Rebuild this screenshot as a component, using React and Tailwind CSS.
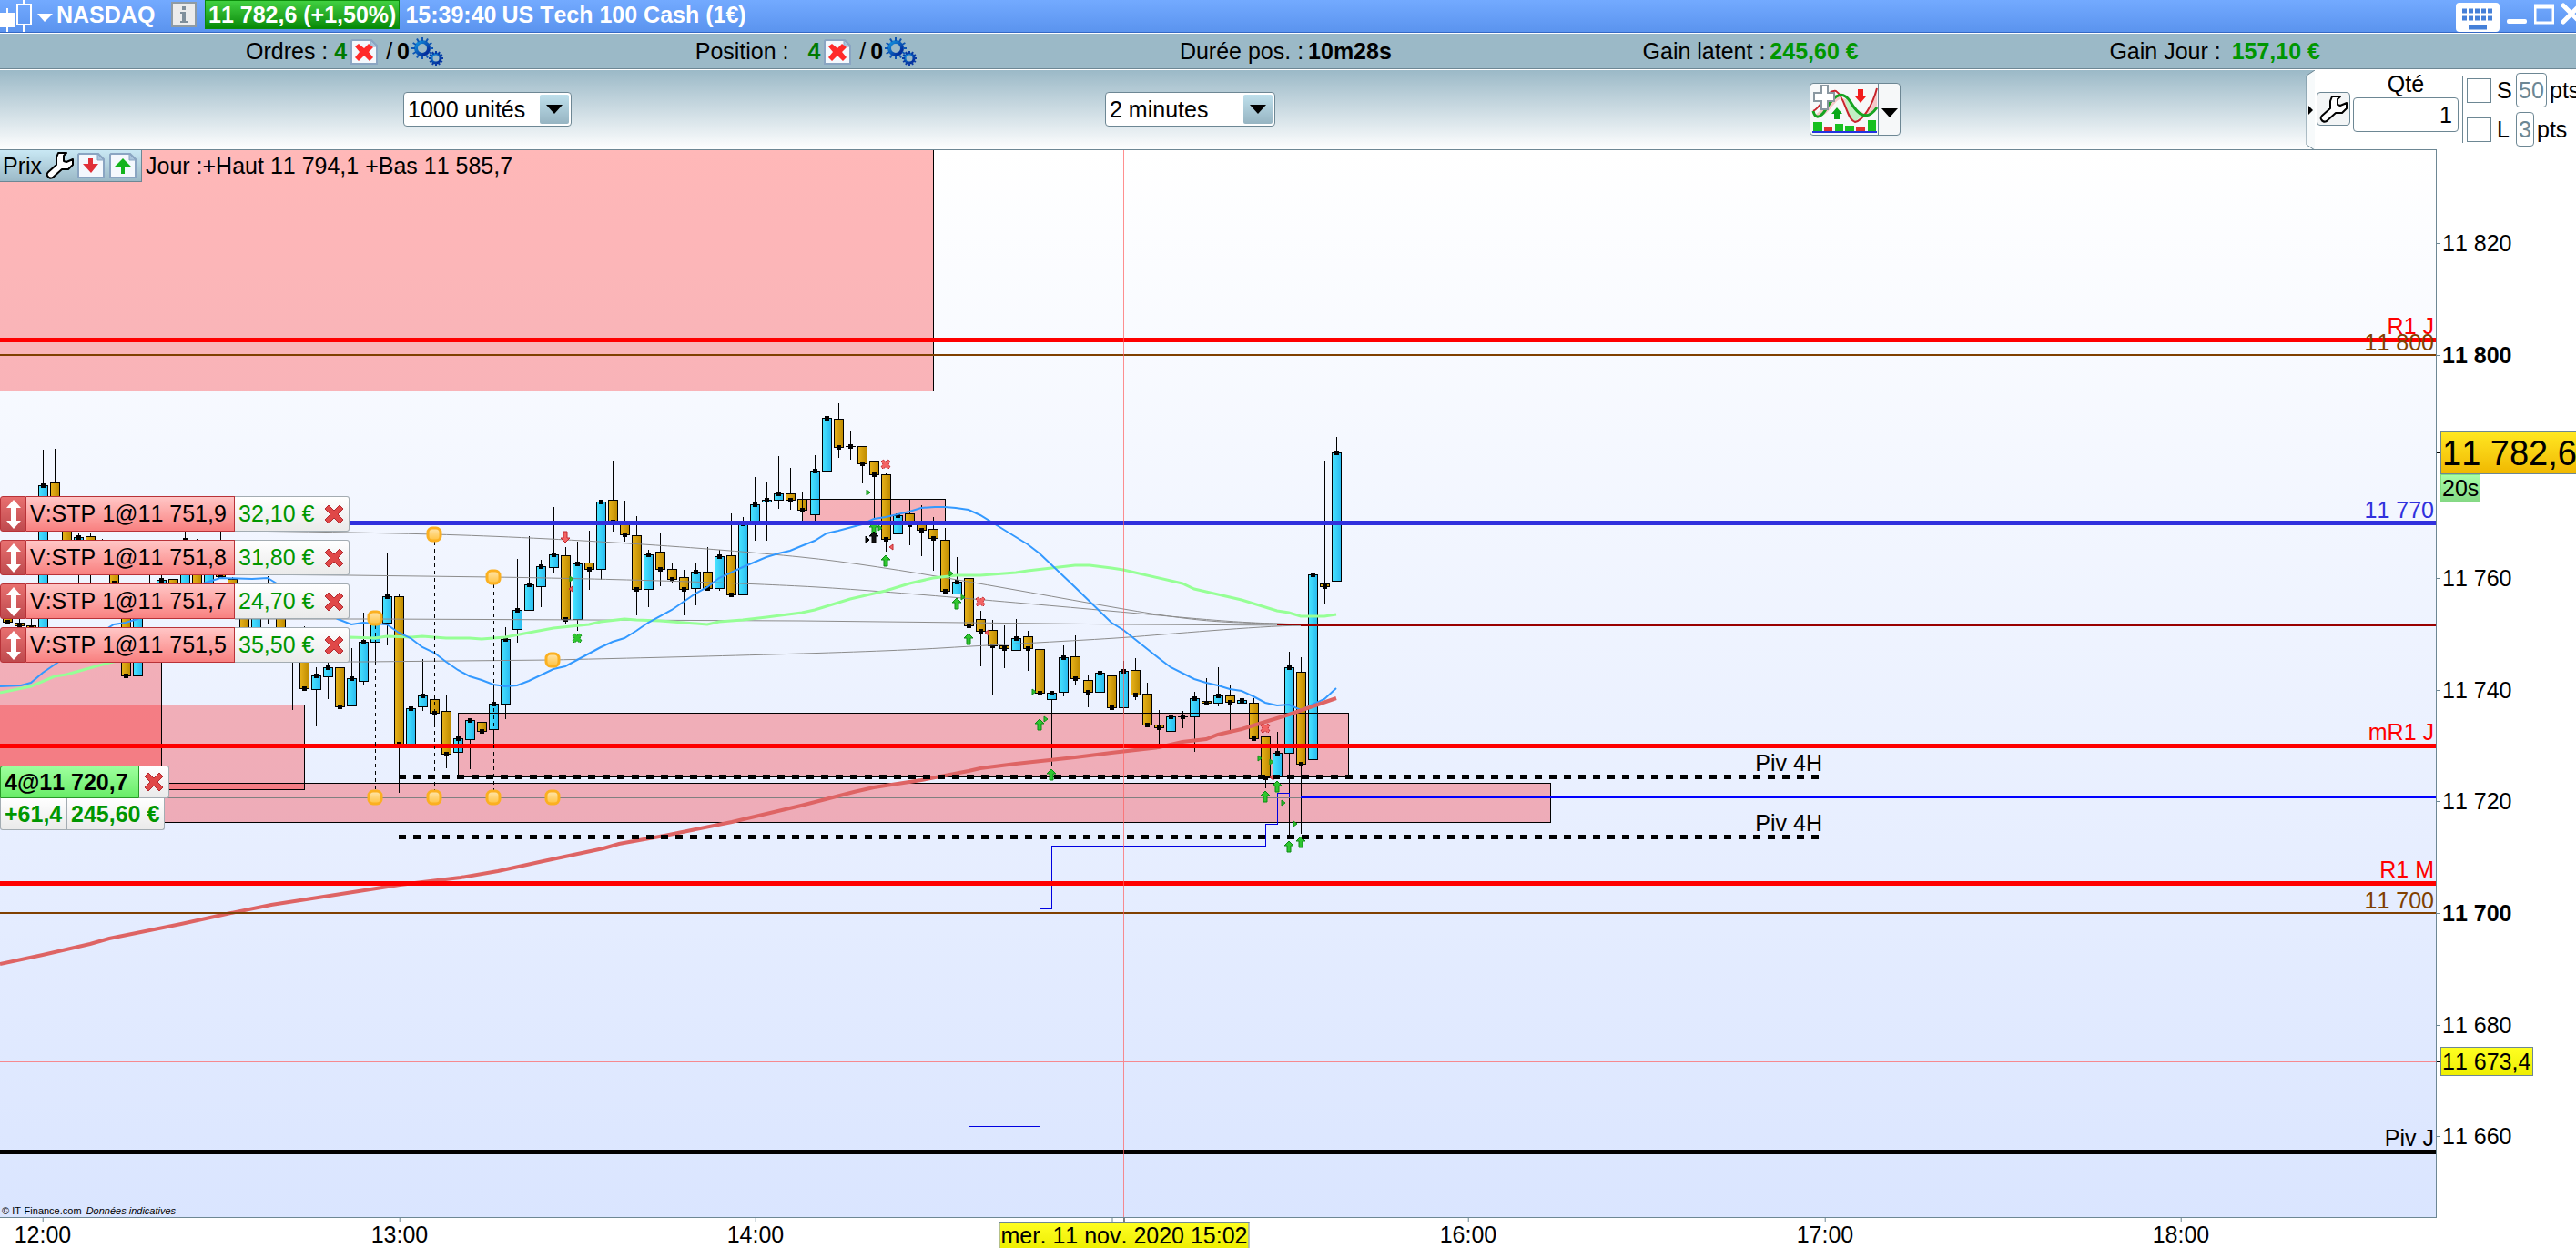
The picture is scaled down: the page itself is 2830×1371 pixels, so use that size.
import React from "react";

const PLOT_TOP = 165;
const priceTop = (price) => Math.round(390 - PLOT_TOP + (11800 - price) * 6.13);
const timeLeft = (hour) => Math.round(47 + (hour - 12) * 391.5);

/* [x, high, bodyTop, bodyBottom, low, direction] */
const CANDLES = [
  [8, 640, 652, 683, 683, -1], [21, 670, 684, 687, 689, -1], [34, 676, 687, 689, 689, -1],
  [47, 494, 533, 700, 710, 1], [60, 493, 530, 565, 575, -1], [73, 555, 562, 600, 600, -1],
  [86, 585, 590, 602, 645, 1], [99, 586, 589, 612, 645, -1], [112, 592, 600, 622, 626, -1],
  [125, 600, 612, 640, 640, -1], [138, 640, 640, 742, 742, -1], [151, 648, 652, 742, 742, 1],
  [164, 630, 652, 668, 675, -1], [177, 632, 637, 655, 660, 1], [190, 636, 636, 655, 660, -1],
  [203, 575, 593, 655, 660, 1], [216, 592, 600, 655, 660, -1], [229, 600, 612, 655, 660, 1],
  [242, 560, 600, 633, 635, -1], [255, 634, 636, 660, 668, -1], [268, 652, 655, 695, 700, -1],
  [281, 650, 655, 700, 705, 1], [294, 633, 652, 672, 684, -1], [308, 652, 655, 697, 700, -1],
  [321, 690, 700, 722, 779, -1], [334, 688, 700, 756, 758, -1], [347, 733, 742, 757, 797, 1],
  [360, 728, 733, 743, 767, 1], [373, 733, 733, 776, 803, -1], [386, 712, 745, 775, 775, 1],
  [399, 673, 705, 748, 752, 1], [412, 675, 679, 705, 729, 1], [425, 607, 655, 684, 708, 1],
  [438, 652, 655, 817, 870, -1], [451, 778, 778, 817, 844, 1], [464, 724, 764, 776, 780, 1],
  [477, 763, 768, 783, 797, -1], [490, 763, 781, 828, 843, -1], [503, 811, 811, 826, 826, 1],
  [516, 789, 791, 812, 844, 1], [529, 778, 793, 803, 826, -1], [542, 753, 773, 801, 819, 1],
  [555, 689, 702, 773, 789, 1], [568, 614, 670, 691, 705, 1], [581, 589, 642, 670, 670, 1],
  [594, 615, 622, 644, 666, 1], [608, 557, 609, 623, 629, 1], [621, 601, 610, 680, 684, -1],
  [634, 595, 619, 680, 692, 1], [647, 583, 618, 625, 647, -1], [660, 551, 551, 625, 636, 1],
  [673, 506, 549, 573, 583, -1], [686, 550, 575, 587, 594, -1], [699, 567, 588, 647, 675, -1],
  [712, 604, 609, 647, 666, 1], [725, 586, 606, 625, 643, -1], [738, 618, 625, 636, 639, -1],
  [751, 626, 634, 647, 675, -1], [764, 619, 628, 646, 664, 1], [777, 601, 628, 646, 646, -1],
  [790, 604, 611, 646, 648, 1], [803, 564, 610, 653, 653, -1], [816, 568, 575, 653, 653, 1],
  [829, 524, 554, 575, 593, 1], [842, 530, 549, 551, 593, 1], [855, 501, 542, 549, 558, 1],
  [868, 514, 542, 549, 559, -1], [881, 540, 548, 560, 574, -1], [895, 500, 517, 565, 572, 1],
  [908, 426, 459, 517, 523, 1], [921, 443, 460, 491, 502, -1], [934, 474, 490, 490, 504, 1],
  [947, 490, 490, 509, 530, -1], [960, 506, 506, 521, 570, -1], [973, 520, 521, 592, 605, -1],
  [986, 564, 566, 586, 618, 1], [999, 548, 564, 576, 598, -1], [1012, 555, 576, 582, 610, -1],
  [1025, 568, 581, 591, 626, -1], [1038, 580, 593, 649, 651, -1], [1051, 612, 639, 652, 652, 1],
  [1064, 625, 635, 687, 692, -1], [1077, 671, 680, 693, 731, -1], [1090, 681, 692, 709, 762, -1],
  [1103, 687, 709, 712, 733, -1], [1116, 680, 701, 714, 714, 1], [1129, 693, 699, 712, 736, -1],
  [1142, 709, 713, 761, 786, -1], [1155, 760, 761, 768, 841, 1], [1168, 709, 722, 760, 764, 1],
  [1181, 698, 721, 745, 752, -1], [1195, 742, 747, 760, 776, -1], [1208, 727, 739, 760, 804, 1],
  [1221, 741, 742, 777, 779, -1], [1234, 726, 737, 777, 782, 1], [1247, 723, 736, 763, 768, -1],
  [1260, 750, 762, 796, 798, -1], [1273, 780, 796, 799, 817, -1], [1286, 779, 787, 803, 807, 1],
  [1299, 781, 787, 787, 799, 1], [1312, 760, 767, 787, 825, 1], [1325, 745, 770, 772, 774, -1],
  [1338, 733, 764, 772, 775, 1], [1351, 752, 764, 771, 803, -1], [1364, 762, 769, 772, 780, 1],
  [1377, 767, 772, 811, 813, -1], [1390, 809, 809, 854, 865, -1], [1403, 804, 827, 853, 853, 1],
  [1416, 716, 733, 827, 917, 1], [1429, 722, 738, 839, 915, -1], [1442, 609, 631, 834, 850, 1],
  [1455, 506, 641, 644, 662, -1], [1468, 480, 497, 638, 638, 1],
];

const FAST_MA =
  "0,754 23,753 34,750 47,739 63,728 120,689 125,686 138,684 151,680 223,641 242,635 277,636 294,635 304,641 371,680 386,686 399,684 425,686 438,695 451,701 464,711 477,717 490,727 503,736 516,743 529,747 542,752 555,754 568,753 581,748 608,735 621,732 634,725 647,718 660,711 673,705 686,701 699,693 712,684 738,670 764,652 777,645 790,635 816,623 842,612 855,608 868,605 880,600 895,594 908,586 921,583 947,576 960,570 973,568 999,562 1012,558 1027,557 1038,557 1050,558 1064,560 1077,566 1103,582 1129,598 1142,608 1181,645 1221,684 1234,692 1273,723 1286,733 1312,746 1325,750 1338,753 1351,757 1364,759 1377,765 1390,772 1403,775 1416,774 1429,780 1455,768 1468,756";
const MID_MA =
  "0,761 34,754 60,743 73,741 120,728 200,710 300,702 384,700 412,701 425,699 452,700 464,699 490,701 516,701 529,702 555,700 581,695 608,690 647,686 660,683 686,680 699,681 725,682 751,684 777,686 790,683 816,681 842,678 881,673 895,670 934,658 973,649 999,641 1025,635 1051,632 1077,632 1116,629 1129,627 1181,621 1197,621 1221,624 1234,626 1299,641 1312,647 1325,650 1364,659 1403,671 1416,673 1429,677 1455,677 1468,675";
const SLOW_MA =
  "0,1059 47,1049 99,1037 120,1031 199,1015 249,1004 298,994 439,972 506,964 547,957 597,946 663,932 680,927 730,918 804,903 880,885 938,870 960,865 1012,857 1064,847 1077,844 1116,839 1181,832 1221,827 1273,821 1299,815 1325,812 1338,807 1364,801 1390,793 1416,785 1442,776 1468,767";

const ZONES = [
  [-5, 150, 1030, 279], [881, 548, 157, 26], [503, 783, 978, 70],
  [-5, 860, 1708, 43], [-5, 715, 182, 152], [-5, 774, 339, 93],
];
const ORDER_CURVES = [
  "M258 583 C330 584 400 585 477 587 C620 591 780 602 880 612 S1140 653 1240 670 S1360 683 1429 686",
  "M258 631 L384 632 L542 634 C680 636 800 640 880 644 S1140 664 1240 673 S1360 684 1429 686",
  "M258 680 L412 680 L880 682 L1240 686 L1429 687",
  "M258 727 L400 727 L607 725 C740 722 950 717 1033 712 S1200 703 1240 700 S1380 688 1429 687",
];
const KNOBS = [[412, 679], [477, 587], [542, 634], [607, 725]];
const UP_ARROWS = [[960, 580], [973, 616], [1051, 663], [1064, 702], [1142, 796], [1155, 851], [1390, 875], [1403, 864], [1416, 930], [1429, 925]];
const GREEN_TICKS = [[954, 541], [967, 580], [1045, 630], [1058, 656], [1136, 760], [1149, 790], [1384, 833], [1397, 837], [1410, 882], [1423, 905], [628, 636]];
const RED_TICKS = [[627, 647], [979, 601], [1084, 695], [1397, 854]];
const CROSSES = [[973, 510], [1077, 661], [1390, 800]];

const ARROW = "M0 -6 L5 -1 H2 V6 H-2 V-1 H-5 Z";
const CROSS = "M-5 -3 L-3 -5 L0 -3 L3 -5 L5 -3 L3 0 L5 3 L3 5 L0 3 L-3 5 L-5 3 L-3 0 Z";

function Chart() {
  return (
    <svg viewBox="0 165 2676 1172" className="block h-auto w-full font-['Liberation_Sans',sans-serif]" role="img" aria-label="NASDAQ 2 minutes">
      <defs>
        <linearGradient id="sky" x1="0" y1="0" x2="0" y2="1">
          <stop offset="0" stopColor="#ffffff" />
          <stop offset="1" stopColor="#dae5ff" />
        </linearGradient>
        <linearGradient id="up"><stop offset="0" stopColor="#46e2ff" /><stop offset="1" stopColor="#2bbcf0" /></linearGradient>
        <linearGradient id="down"><stop offset="0" stopColor="#e6b11a" /><stop offset="1" stopColor="#c08c00" /></linearGradient>
        <linearGradient id="knob" x1="0" y1="0" x2="0" y2="1"><stop offset="0" stopColor="#ffe6ae" /><stop offset="1" stopColor="#ffc23e" /></linearGradient>
      </defs>
      <rect x="0" y="165" width="2676" height="1172" fill="url(#sky)" />
      {ZONES.map(([x, y, w, h], i) => <rect key={i} x={x} y={y} width={w} height={h} fill="#ff0000" fillOpacity="0.28" />)}

      <g shapeRendering="crispEdges">
        {CANDLES.map(([x, hi, top, bottom, lo, dir]) => {
          const close = dir > 0 ? top : bottom;
          return (
            <g key={x}>
              <rect x={x} y={hi} width="1" height={lo - hi + 1} />
              <rect x={x - 5} y={top} width="11" height={bottom - top + 1} />
              {bottom - top > 1 && <rect x={x - 4} y={top + 1} width="9" height={bottom - top - 1} fill={dir > 0 ? "url(#up)" : "url(#down)"} />}
              <rect x={x - 2} y={close - 2} width="5" height="5" />
            </g>
          );
        })}
        {ZONES.map(([x, y, w, h], i) => <rect key={i} x={x} y={y} width={w} height={h} fill="none" stroke="#000" />)}
        <path d="M1064.5 1337 V1237.5 H1142.5 V998.5 H1155.5 V929.5 H1390.5 V905.5 H1403.5 V871.5 H1416.5 V876.5" fill="none" stroke="#0000e0" />
        <path d="M180 876.5 H1429" stroke="#808080" />
      </g>

      <g fill="none">
        {ORDER_CURVES.map((d) => <path key={d} d={d} stroke="#8c8c8c" />)}
        <polyline points={MID_MA} stroke="#96ff96" strokeWidth="3" />
        <polyline points={FAST_MA} stroke="#3399ff" strokeWidth="2" />
        <polyline points={SLOW_MA} stroke="#de6464" strokeWidth="4" />
      </g>

      <g fill="#2fc62f" stroke="#0c8a14">
        {UP_ARROWS.map(([x, y]) => <path key={x + "-" + y} d={ARROW} transform={`translate(${x} ${y})`} />)}
        {GREEN_TICKS.map(([x, y]) => <path key={x + "-" + y} d="M-2 -3 L2 0 L-2 3 Z" transform={`translate(${x} ${y})`} />)}
        <path d={CROSS} transform="translate(634 701)" strokeDasharray="2 1" />
      </g>
      <g fill="#f46464" stroke="#c02830">
        {CROSSES.map(([x, y]) => <path key={x} d={CROSS} transform={`translate(${x} ${y})`} strokeDasharray="2 1" />)}
        {RED_TICKS.map(([x, y]) => <path key={x} d="M2 -3 L-2 0 L2 3 Z" transform={`translate(${x} ${y})`} />)}
        <path d={ARROW} transform="translate(621 590) rotate(180)" />
      </g>
      <path d={ARROW} transform="translate(960 590)" fill="#111" stroke="#000" />
      <path d="M-2 -4 L2 0 L-2 4 Z" transform="translate(953 593)" stroke="#000" />

      <g shapeRendering="crispEdges">
        <rect x="0" y="371" width="2676" height="5" fill="#f00" />
        <rect x="0" y="389" width="2676" height="2" fill="#804000" />
        <rect x="0" y="572" width="2676" height="5" fill="#3030dd" />
        <rect x="1403" y="686" width="26" height="1" fill="#990000" />
        <rect x="1429" y="685" width="1247" height="3" fill="#990000" />
        <rect x="0" y="817" width="2676" height="5" fill="#f00" />
        <rect x="1429" y="875" width="1247" height="2" fill="#0000ff" />
        <rect x="0" y="968" width="2676" height="5" fill="#f00" />
        <rect x="0" y="1002" width="2676" height="2" fill="#804000" />
        <rect x="0" y="1263" width="2676" height="5" fill="#000" />
        <path d="M438 853.5 H2000 M438 919.5 H2000" stroke="#000" strokeWidth="5" strokeDasharray="8 8" />
        <path d="M1234.5 165 V1337 M0 1166.5 H2676" stroke="#ff6060" strokeOpacity="0.7" />
        {KNOBS.map(([x, y]) => <path key={x} d={`M${x}.5 ${y + 8} V868`} stroke="#000" strokeDasharray="4 4" />)}
      </g>
      {KNOBS.map(([x, y]) => (
        <g key={x} fill="url(#knob)" stroke="#fbb020" strokeWidth="3">
          <rect x={x - 7} y={y - 7} width="14" height="14" rx="5" />
          <rect x={x - 7} y="869" width="14" height="14" rx="5" />
        </g>
      ))}

      <g fontSize="25" textAnchor="end">
        <text x="2674" y="367" fill="#f00">R1 J</text>
        <text x="2674" y="385" fill="#804000">11 800</text>
        <text x="2674" y="569" fill="#3030dd">11 770</text>
        <text x="2674" y="813" fill="#f00">mR1 J</text>
        <text x="2674" y="964" fill="#f00">R1 M</text>
        <text x="2674" y="998" fill="#804000">11 700</text>
        <text x="2674" y="1259">Piv J</text>
        <text x="2002" y="847">Piv 4H</text>
        <text x="2002" y="913">Piv 4H</text>
      </g>
    </svg>
  );
}

function Wrench({ className }) {
  return (
    <svg viewBox="0 0 32 32" className={className} aria-hidden="true">
      <path d="M14 2 H23 L20 5 V11 L23 12 L30 9 V15 L25 20 H18 L8 29 Q4 31 2 27 Q1 25 3 23 L12 15 V7 Z" fill="#fff" stroke="#000" strokeWidth="2" strokeLinejoin="round" />
    </svg>
  );
}

function DocIcon({ children }) {
  return (
    <svg viewBox="0 0 30 28" className="h-7 w-[30px]" aria-hidden="true">
      <path d="M2 1 H23 L29 7 V27 H1 V2 Z" fill="#f4f8fd" stroke="#8aa5c2" strokeWidth="2" />
      <path d="M22 1 V8 H29 Z" fill="#a9c4dc" stroke="#8aa5c2" />
      {children}
    </svg>
  );
}

const cogTeeth = [0, 30, 60, 90, 120, 150, 180, 210, 240, 270, 300, 330];
function Gears() {
  return (
    <svg viewBox="0 0 36 32" className="h-8 w-9" aria-hidden="true">
      <defs>
        <linearGradient id="cog" x1="0" y1="0" x2="1" y2="1"><stop offset="0" stopColor="#1494e0" /><stop offset="1" stopColor="#001c90" /></linearGradient>
      </defs>
      <g fill="none" stroke="url(#cog)">
        <circle cx="12" cy="12" r="7" strokeWidth="4" />
        <circle cx="27" cy="23" r="5" strokeWidth="3" />
      </g>
      {cogTeeth.map((a) => (
        <g key={a}>
          <rect x="11" y="0" width="2" height="4" fill="#0d55b4" transform={`rotate(${a} 12 12)`} />
          <rect x="26" y="15" width="2" height="3" fill="#0a3ba4" transform={`rotate(${a} 27 23)`} />
        </g>
      ))}
    </svg>
  );
}

function RedCross({ className }) {
  return (
    <svg viewBox="0 0 22 22" className={className} aria-hidden="true">
      <path d="M1 5 L5 1 L11 7 L17 1 L21 5 L15 11 L21 17 L17 21 L11 15 L5 21 L1 17 L7 11 Z" fill="#e04848" stroke="#b22a30" />
    </svg>
  );
}

function TitleBar() {
  return (
    <header className="flex h-[37px] items-start border-b border-b-white bg-linear-to-b from-[#73aaff] to-[#5a93ee] text-[25px] font-bold text-white shadow-[inset_0_-1px_0_#3569c4]">
      <svg viewBox="0 0 62 36" className="h-9 w-[62px] shrink-0" aria-hidden="true">
        <path d="M0 14 H16 V30 H0 Z M7 9 H9 V35 H7 Z M41 15 H58 L49 24 Z" fill="#fff" />
        <path d="M19 5 H34 V27 H19 Z M26 0 V5 M26 27 V35" fill="none" stroke="#fff" strokeWidth="2" />
      </svg>
      <h1 className="w-[126px] shrink-0 leading-[32px]">NASDAQ</h1>
      <button type="button" aria-label="Informations" className="mt-[2px] h-7 w-7 shrink-0">
        <svg viewBox="0 0 28 28" className="h-7 w-7" aria-hidden="true">
          <rect x="1" y="1" width="26" height="26" fill="#ececec" stroke="#8f9ba4" strokeWidth="2" />
          <path d="M12 5 H16 V9 H12 Z M10 11 H16 V21 H18 V23 H10 V21 H12 V13 H10 Z" fill="#7f8f9b" />
        </svg>
      </button>
      <span className="ml-[9px] h-8 border border-[#0a8a0a] bg-linear-to-b from-[#40d040] to-[#048a04] px-[3px] leading-[30px] whitespace-nowrap">11 782,6 (+1,50%)</span>
      <span className="ml-[6px] leading-[32px]">15:39:40</span>
      <span className="ml-[6px] leading-[32px] whitespace-nowrap">US Tech 100 Cash (1€)</span>
      <div className="-mr-[10px] ml-auto flex shrink-0">
        <button type="button" aria-label="Clavier" className="mt-[3px] h-8 w-12">
          <svg viewBox="0 0 48 32" className="h-8 w-12" aria-hidden="true">
            <rect width="48" height="32" rx="4" fill="#fff" />
            <path d="M7 9 H42 M7 17 H42" stroke="#4580d8" strokeWidth="5" strokeDasharray="5 2" />
            <path d="M14 27 H34" stroke="#4580d8" strokeWidth="5" />
          </svg>
        </button>
        <button type="button" aria-label="Réduire" className="ml-2 h-9 w-[22px]">
          <svg viewBox="0 0 22 36" className="h-9 w-[22px]" aria-hidden="true"><rect y="21" width="22" height="5" rx="2" fill="#fff" /></svg>
        </button>
        <button type="button" aria-label="Agrandir" className="ml-2 h-9 w-[22px]">
          <svg viewBox="0 0 22 36" className="h-9 w-[22px]" aria-hidden="true"><path d="M1 6 H21 V25 H1 Z M1 8 H21" fill="none" stroke="#fff" strokeWidth="3" /></svg>
        </button>
        <button type="button" aria-label="Fermer" className="ml-2 h-9 w-[26px]">
          <svg viewBox="0 0 26 36" className="h-9 w-[26px]" aria-hidden="true"><path d="M2 6 L20 24 M20 6 L2 24" stroke="#fff" strokeWidth="5" strokeLinecap="round" /></svg>
        </button>
      </div>
    </header>
  );
}

function Orders({ label, className }) {
  return (
    <div className={className}>
      <span>{label}</span>
      <b className="text-[#007a00]">4</b>
      <button type="button" aria-label="Annuler" className="ml-1">
        <DocIcon><path d="M5 8 L9 5 L15 10 L20 5 L25 9 L20 14 L25 20 L21 24 L15 18 L9 24 L5 20 L10 14 Z" fill="#ff2a2a" /></DocIcon>
      </button>
      <span className="ml-[9px]">/</span>
      <b className="ml-[5px]">0</b>
      <button type="button" aria-label="Automatique" className="ml-[2px]"><Gears /></button>
    </div>
  );
}

function Metric({ label, value, className }) {
  return (
    <div className="flex items-center gap-[5px]">
      <span>{label}</span>
      <b className={className}>{value}</b>
    </div>
  );
}

function StatusBar() {
  return (
    <section className="flex h-10 items-center justify-between border-b border-b-white bg-[#9bb9c7] pr-[281px] pl-[270px] text-[25px] whitespace-nowrap shadow-[inset_0_-1px_0_#6d8794]">
      <Orders label={"Ordres :\u00a0"} className="flex items-center" />
      <Orders label={"Position : \u00a0\u00a0"} className="mr-3 flex items-center" />
      <Metric label="Durée pos. :" value="10m28s" />
      <Metric label="Gain latent :" value="245,60 €" className="text-[#009600]" />
      <Metric label={"Gain Jour :\u00a0"} value="157,10 €" className="text-[#009600]" />
    </section>
  );
}

function Picker({ label, options, className }) {
  return (
    <div className={className}>
      <select aria-label={label} className="col-start-1 row-start-1 h-[38px] w-full appearance-none rounded-[4px] border border-[#6d8794] bg-white pl-[4px] text-[25px] leading-[36px]">
        {options.map((o) => <option key={o}>{o}</option>)}
      </select>
      <span className="pointer-events-none col-start-1 row-start-1 mr-[3px] flex h-8 w-8 items-center justify-center justify-self-end rounded-[2px] bg-linear-to-b from-[#bfe0ec] to-[#96b4c2]">
        <svg viewBox="0 0 18 10" className="h-[10px] w-[18px]" aria-hidden="true"><path d="M0 0 H18 L9 10 Z" /></svg>
      </span>
    </div>
  );
}

function IndicatorButton() {
  return (
    <div className="flex h-[58px] shrink-0 rounded-[4px] border border-[#6d8794] bg-[#f6f8f9]">
      <button type="button" aria-label="Ajouter un indicateur" className="w-[75px] border-r border-[#6d8794]">
        <svg viewBox="0 0 75 56" className="h-14 w-[75px]" aria-hidden="true">
          <path d="M3 36 C12 30 18 20 27 12 C32 12 36 22 36 16 L42 18 C50 24 54 36 60 34 C66 30 70 20 73 6 L73 24 C66 36 60 36 56 30 L49 42 C42 38 38 20 34 16 C24 20 20 36 8 36 Z" fill="#f6c9c9" />
          <path d="M38 17 C50 22 54 34 58 33 L50 41 C44 40 40 28 38 17 Z" fill="#c2eec4" />
          <path d="M3 30 C12 26 18 6 28 8 C38 14 40 40 49 42 C58 40 68 24 73 5" fill="none" stroke="#c8242c" strokeWidth="2" />
          <path d="M3 30 C6 42 14 34 18 26 C28 10 36 8 44 20 C52 34 62 42 73 26" fill="none" stroke="#16a422" strokeWidth="3" />
          <path d="M12 2 H19 V10 H26 V19 H19 V28 H12 V19 H4 V10 H12 Z" fill="#fff" stroke="#8a97a0" strokeWidth="2" />
          <path d="M52 6 H58 V14 H61 L55 21 L49 14 H52 Z" fill="#f21c1c" />
          <path d="M29 26 L35 33 H32 V39 H26 V33 H23 Z" fill="#08a818" />
          <path d="M3 42 H13 V52 H3 Z M27 44 H36 V52 H27 Z M38 46 H48 V52 H38 Z M63 40 H72 V52 H63 Z" fill="#18c020" />
          <path d="M15 47 H24 V52 H15 Z M50 47 H60 V52 H50 Z" fill="#e03030" />
          <path d="M2 52 H73 V54 H2 Z" fill="#2233e0" />
        </svg>
      </button>
      <button type="button" aria-label="Indicateurs" className="flex w-[23px] items-center justify-center">
        <svg viewBox="0 0 18 10" className="mt-2 h-[10px] w-[18px]" aria-hidden="true"><path d="M0 0 H18 L9 10 Z" /></svg>
      </button>
    </div>
  );
}

function OffsetRow({ id, value, width }) {
  return (
    <div className="flex h-[38px] items-center">
      <input id={id} type="checkbox" className="h-[27px] w-[27px] shrink-0 appearance-none border border-[#6d8794] bg-white" />
      <label htmlFor={id} className="ml-[6px] w-[21px]">{id}</label>
      <input type="text" aria-label={id + " points"} defaultValue={value} className={width} />
      <span className="ml-[3px]">pts</span>
    </div>
  );
}

function TradePanel() {
  return (
    <div className="ml-auto flex h-[89px] shrink-0 text-[25px] leading-[30px]">
      <svg viewBox="0 0 10 88" className="h-[88px] w-[10px]" aria-hidden="true">
        <path d="M10 0 L1 6 V82 L10 88 Z" fill="#f7fafb" />
        <path d="M10 0 L1 6 V82 L10 88" fill="none" stroke="#6d8794" />
        <path d="M3 39 L8 44 L3 49 Z" />
      </svg>
      <div className="flex w-[287px] bg-white pl-[2px]">
        <button type="button" aria-label="Réglages" className="mt-6 flex h-[37px] w-[37px] shrink-0 items-center justify-center rounded-[4px] border border-[#6d8794] bg-[#f3f5f6]"><Wrench className="h-8 w-8" /></button>
        <div className="ml-[3px] flex w-[116px] shrink-0 flex-col">
          <label htmlFor="qty" className="text-center">Qté</label>
          <input id="qty" type="text" defaultValue="1" className="h-[38px] w-full rounded-[4px] border border-[#6d8794] bg-white pr-[6px] text-right" />
        </div>
        <div className="mt-[7px] ml-1 h-[73px] w-px shrink-0 bg-[#6d8794]" />
        <div className="mt-[3px] ml-[4px] flex flex-col gap-[5px] whitespace-nowrap">
          <OffsetRow id="S" value="50" width="h-[38px] w-[34px] shrink-0 rounded-[4px] border border-[#6d8794] bg-white text-center text-[#6d8794]" />
          <OffsetRow id="L" value="3" width="h-[38px] w-[20px] shrink-0 rounded-[4px] border border-[#6d8794] bg-white text-center text-[#6d8794]" />
        </div>
      </div>
    </div>
  );
}

function Toolbar() {
  return (
    <section className="flex h-[88px] items-start bg-linear-to-b from-[#9bb9c7] to-white pl-[443px]">
      <Picker label="Unités" options={["1000 unités"]} className="mt-6 grid w-[185px] shrink-0 items-center" />
      <Picker label="Période" options={["2 minutes"]} className="mt-6 ml-[586px] grid w-[187px] shrink-0 items-center" />
      <div className="mt-[14px] ml-[587px]"><IndicatorButton /></div>
      <TradePanel />
    </section>
  );
}

const STOPS = [["11 751,9", "32,10 €"], ["11 751,8", "31,80 €"], ["11 751,7", "24,70 €"], ["11 751,5", "35,50 €"]];

function StopTag({ price, gain }) {
  return (
    <div className="flex h-[39px] w-[384px] text-[25px] leading-[37px] whitespace-nowrap">
      <button type="button" aria-label={"Déplacer " + price} className="flex w-[29px] items-center justify-center rounded-l-[3px] border border-[#b83238] bg-linear-to-b from-[#e87070] to-[#bf4a4e]">
        <svg viewBox="0 0 18 34" className="h-[34px] w-[18px]" aria-hidden="true"><path d="M9 1 L17 10 H12 V24 H17 L9 33 L1 24 H6 V10 H1 Z" fill="#fff" /></svg>
      </button>
      <span className="w-[229px] border-y border-r border-[#b83238] bg-linear-to-b from-[#ffc6c6] to-[#f88080] pl-[4px]">V:STP 1@{price}</span>
      <span className="w-[93px] border-y border-r border-[#a3acb2] bg-linear-to-b from-white to-[#eaeaea] pl-[4px] text-[#009600]">{gain}</span>
      <button type="button" aria-label={"Supprimer " + price} className="flex w-[33px] items-center justify-center rounded-r-[3px] border-y border-r border-[#a3acb2] bg-linear-to-b from-white to-[#eaeaea]"><RedCross className="h-[22px] w-[22px]" /></button>
    </div>
  );
}

function PositionTag() {
  return (
    <div className="flex flex-col items-start text-[25px] font-bold text-[#009600] whitespace-nowrap">
      <div className="flex h-9 leading-[34px]">
        <span className="w-[153px] rounded-tl-[3px] border border-[#289a28] bg-linear-to-b from-[#9dff9d] to-[#68ec68] pl-[4px] text-black">4@11 720,7</span>
        <button type="button" aria-label="Fermer la position" className="flex w-[33px] items-center justify-center rounded-r-[3px] border border-l-0 border-[#a3acb2] bg-linear-to-b from-white to-[#eaeaea]"><RedCross className="h-[22px] w-[22px]" /></button>
      </div>
      <div className="flex h-[35px] rounded-b-[3px] border border-t-0 border-[#a3acb2] bg-linear-to-b from-white to-[#eaeaea] leading-[34px]">
        <span className="w-[73px] border-r border-[#a3acb2] pl-[4px]">+61,4</span>
        <span className="w-[106px] pl-[4px]">245,60 €</span>
      </div>
    </div>
  );
}

function PlotHeader() {
  return (
    <div className="flex items-center text-[25px] leading-[33px] whitespace-nowrap">
      <div className="flex h-[35px] w-[156px] items-center border-r border-b border-[#6d8794] bg-linear-to-b from-[#c9e8f4] to-[#9bb9c7] pl-[3px]">
        <span>Prix</span>
        <button type="button" aria-label="Réglages du prix" className="ml-[4px]"><Wrench className="h-8 w-8" /></button>
        <button type="button" aria-label="Vendre" className="ml-[3px]"><DocIcon><path d="M12 6 H17 V12 H23 L15 22 L6 12 H12 Z" fill="#e03038" /></DocIcon></button>
        <button type="button" aria-label="Acheter" className="ml-[5px]"><DocIcon><path d="M15 6 L24 15 H17 V23 H13 V15 H6 Z" fill="#14b41c" /></DocIcon></button>
      </div>
      <span className="ml-[4px]">Jour :+Haut 11 794,1 +Bas 11 585,7</span>
    </div>
  );
}

const PRICES = [11820, 11800, 11760, 11740, 11720, 11700, 11680, 11660];
const formatPrice = (p) => "11 " + (p - 11000);

function PriceAxis() {
  return (
    <aside className="relative w-[153px] shrink-0 text-[25px] leading-[30px] whitespace-nowrap">
      {PRICES.map((p) => (
        <div key={p} className="absolute left-0 flex -translate-y-1/2 items-center gap-[2px]" style={{ top: priceTop(p) }}>
          <i className="h-px w-1 bg-[#6d8794]" />
          <span className={p % 100 === 0 ? "font-bold" : "font-normal"}>{formatPrice(p)}</span>
        </div>
      ))}
      <div className="absolute top-[309px] left-0 flex flex-col items-start">
        <div className="flex items-center">
          <i className="h-px w-1 bg-black" />
          <span className="h-[47px] w-[170px] border border-[#6d8794] bg-linear-to-b from-[#ffe720] to-[#f0b800] pl-px text-[38px] leading-[46px]">11 782,6</span>
        </div>
        <span className="ml-1 h-[31px] border border-[#80e080] bg-linear-to-b from-[#a8ffa8] to-[#84d884] px-[1px] leading-[29px]">20s</span>
      </div>
      <div className="absolute left-0 flex -translate-y-1/2 items-center" style={{ top: priceTop(11673.4) }}>
        <i className="h-px w-1 bg-black" />
        <span className="h-8 w-[102px] border border-[#6d8794] bg-linear-to-b from-[#ffff20] to-[#eeee00] pl-px">11 673,4</span>
      </div>
    </aside>
  );
}

const HOURS = [12, 13, 14, 15, 16, 17, 18];

function TimeAxis() {
  return (
    <footer className="relative h-[33px] text-[25px] leading-[29px] whitespace-nowrap">
      {HOURS.map((h) => (
        <div key={h} className="absolute top-0 flex -translate-x-1/2 flex-col items-center" style={{ left: timeLeft(h) }}>
          <i className="h-1 w-px bg-[#6d8794]" />
          {h !== 15 && <span>{h}:00</span>}
        </div>
      ))}
      <div className="absolute top-0 flex -translate-x-1/2 flex-col items-center" style={{ left: timeLeft(15) + 13 }}>
        <i className="h-1 w-px bg-black" />
        <span className="h-[29px] border border-b-0 border-[#6d8794] bg-linear-to-b from-[#ffff20] to-[#eeee00] px-[1px] leading-[28px]">mer. 11 nov. 2020 15:02</span>
      </div>
    </footer>
  );
}

export default function App() {
  return (
    <div className="w-full overflow-hidden bg-white font-['Liberation_Sans',Arial,sans-serif] text-black [font-kerning:none]">
      <TitleBar />
      <StatusBar />
      <Toolbar />
      <main className="flex">
        <div className="relative min-w-0 flex-1 border-r border-b border-[#6d8794] shadow-[0_-1px_0_#6d8794]">
          <Chart />
          <div className="absolute top-0 left-0"><PlotHeader /></div>
          <div className="absolute top-[380px] left-0 flex flex-col gap-[9px]">
            {STOPS.map(([price, gain]) => <StopTag key={price} price={price} gain={gain} />)}
          </div>
          <div className="absolute top-[676px] left-0"><PositionTag /></div>
          <small className="absolute bottom-0 left-[2px] text-[11px] leading-[13px]">© IT-Finance.com <em className="ml-[2px]">Données indicatives</em></small>
        </div>
        <PriceAxis />
      </main>
      <TimeAxis />
    </div>
  );
}
